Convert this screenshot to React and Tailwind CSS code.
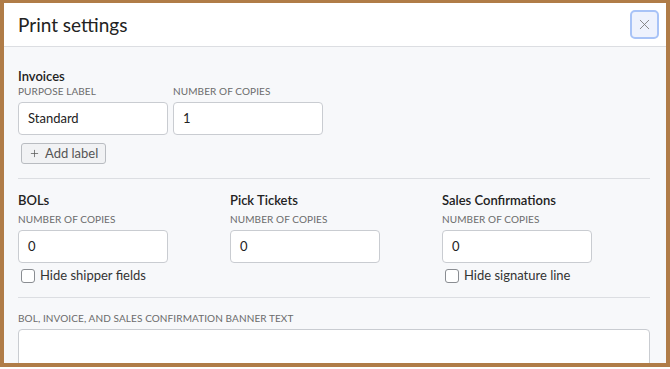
import { X, Plus } from "lucide-react";

const Label = ({ children }) => (
  <div className="text-[10px] uppercase text-[#6b6b6b] leading-[14px] tracking-[0.1px]">
    {children}
  </div>
);

const Input = ({ value }) => (
  <div className="w-[150px] h-[33px] bg-white border border-[#c9ccd1] rounded-[4px] flex items-center px-[9px] text-[13px] text-[#222]">
    {value}
  </div>
);

const Checkbox = ({ label }) => (
  <label className="flex items-center gap-[5px] ml-[3px] mt-[5px] h-[15px] text-[13px] text-[#333]">
    <span className="w-[14px] h-[14px] rounded-[3px] border border-[#8a8d92] bg-white" />
    {label}
  </label>
);

const Column = ({ title, check }) => (
  <div className="w-[212px] shrink-0">
    <h3 className="text-[13px] font-semibold text-[#222] leading-[16px]">{title}</h3>
    <div className="mt-[4px]">
      <Label>Number of copies</Label>
    </div>
    <div className="mt-[4px]">
      <Input value="0" />
    </div>
    {check ? <Checkbox label={check} /> : <div className="h-[20px]" />}
  </div>
);

export default function App() {
  return (
    <div
      className="w-[670px] h-[369px] overflow-hidden bg-white"
      style={{ fontFamily: "Lato, sans-serif" }}
    >
      <div className="h-[367px] border-[#b07c47] border-l-[4px] border-r-[4px] border-t-[3px] border-b-[4px] overflow-hidden flex flex-col">
        {/* HEADER */}
        <div className="h-[44px] shrink-0 bg-white border-b border-[#dcdee2] flex items-center justify-between pl-[14px] pr-[7px]">
          <h1 className="text-[19px] text-[#222] leading-none">Print settings</h1>
          <button className="w-[29px] h-[29px] rounded-[5px] border-2 border-[#a8c3f7] bg-[#eef2fd] flex items-center justify-center text-[#777]">
            <X size={17} strokeWidth={1.2} />
          </button>
        </div>

        {/* BODY */}
        <div className="flex-1 bg-[#f7f8fa] pl-[14px] pr-[16px] pt-[21px]">
          <h3 className="text-[13px] font-semibold text-[#222] leading-[16px]">Invoices</h3>
          <div className="flex gap-[5px]">
            <div>
              <Label>Purpose label</Label>
              <div className="mt-[4px]">
                <Input value="Standard" />
              </div>
            </div>
            <div>
              <Label>Number of copies</Label>
              <div className="mt-[4px]">
                <Input value="1" />
              </div>
            </div>
          </div>
          <button className="mt-[8px] ml-[3px] h-[21px] px-[7px] flex items-center gap-[5px] border border-[#b9bcc1] bg-[#f1f2f4] rounded-[3px] text-[13px] text-[#555]">
            <Plus size={11} strokeWidth={1.6} />
            Add label
          </button>

          <div className="border-t border-[#dcdee2] mt-[14px]" />

          <div className="flex pt-[13px]">
            <Column title="BOLs" check="Hide shipper fields" />
            <Column title="Pick Tickets" />
            <Column title="Sales Confirmations" check="Hide signature line" />
          </div>

          <div className="border-t border-[#dcdee2] mt-[14px]" />

          <div className="mt-[13px]">
            <Label>BOL, invoice, and sales confirmation banner text</Label>
          </div>
          <div className="mt-[4px] h-[60px] bg-white border border-[#c9ccd1] rounded-[4px]" />
        </div>
      </div>
    </div>
  );
}
